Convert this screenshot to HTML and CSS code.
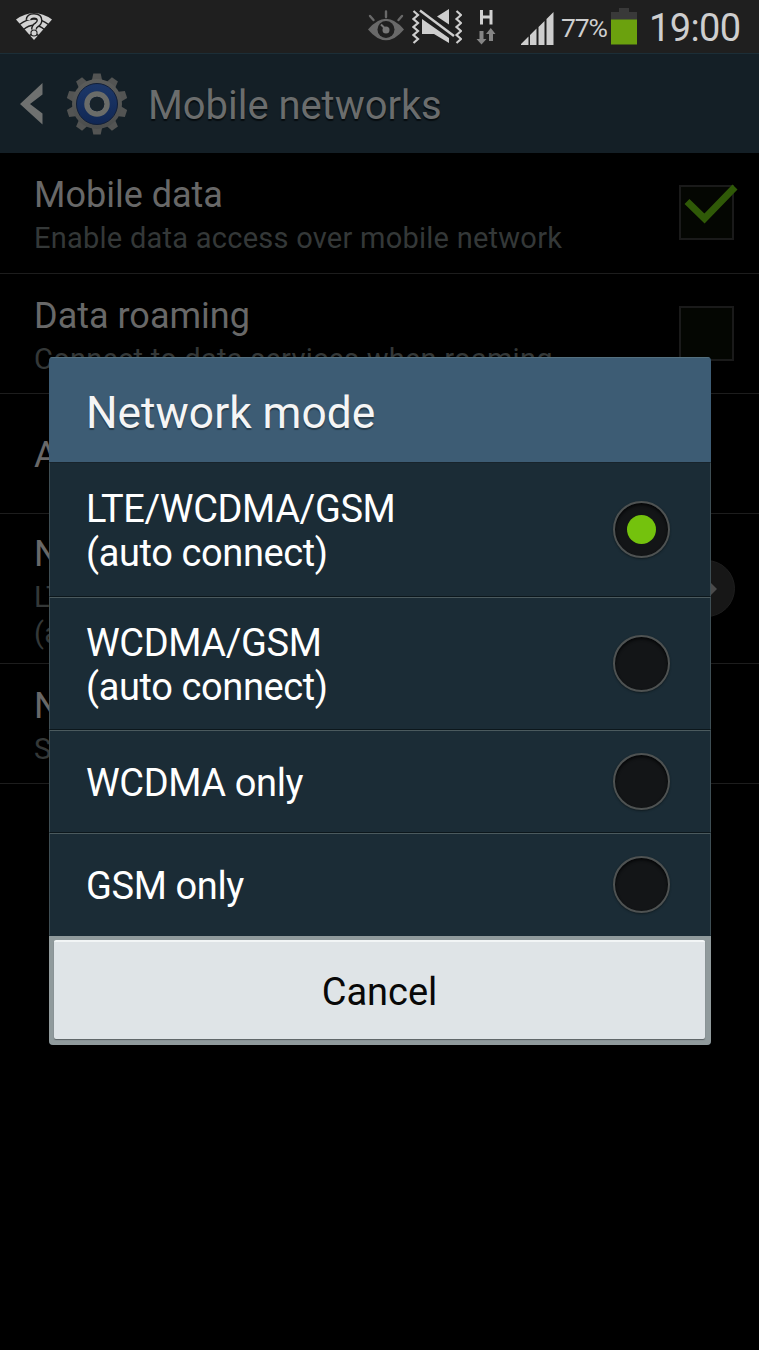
FILE: index.html
```html
<!DOCTYPE html>
<html lang="en">
<head>
<meta charset="utf-8">
<title>Mobile networks</title>
<link rel="stylesheet" href="styles.css">
</head>
<body>
<div class="screen">
  <header class="status">
    <svg class="wifi" width="38" height="30" viewBox="0 0 38 30">
      <path d="M1 7.500Q19-5.500 37 7.500L19 28Z" fill="#d2d2d2"/>
      <path d="M4.500 12.500Q19 1.500 33.500 12.500M8.500 17.500Q19 9 29.500 17.500M13.500 24Q19 20 24.500 24" fill="none" stroke="#1f1f1f" stroke-width="1.500"/>
      <path d="M13.500 8Q14 4 19 4Q24.500 4 24.500 8.500Q24.500 11 21.500 13Q19 14.500 19 17.500" fill="none" stroke="#1f1f1f" stroke-width="6"/>
      <circle cx="19" cy="21" r="3.600" fill="#1f1f1f"/>
      <path d="M13.500 8Q14 4 19 4Q24.500 4 24.500 8.500Q24.500 11 21.500 13Q19 14.500 19 17.500" fill="none" stroke="#d2d2d2" stroke-width="3.200"/>
      <circle cx="19" cy="21" r="2.500" fill="#d2d2d2"/>
    </svg>
    <div class="indicators">
      <svg class="eye" width="38" height="34" viewBox="0 0 38 34">
        <path d="M1 20.500Q19-1 37 20.500Q19 42 1 20.500Z" fill="#696969"/>
        <circle cx="19" cy="20.500" r="8.500" fill="#1f1f1f"/>
        <circle cx="19" cy="21" r="3.500" fill="#777"/>
        <path d="M14 15.500L19 20.500" stroke="#777" stroke-width="2"/>
        <path d="M3 7L6.500 11M19 2.500V8M35 7L31.500 11" stroke="#696969" stroke-width="2.400" stroke-linecap="round"/>
      </svg>
      <svg class="mute" width="50" height="36" viewBox="0 0 50 36">
        <path d="M1.500 2L6 6L1.500 10L6 14L1.500 18L6 22L1.500 26L6 30L1.500 34M44.500 2L49 6L44.500 10L49 14L44.500 18L49 22L44.500 26L49 30L44.500 34" fill="none" stroke="#cecece" stroke-width="2.200"/>
        <path d="M37 0V15.500L25 7.500ZM10 10L37 29V34L22 25H10Z" fill="#cecece"/>
        <path d="M8 1.500L42 27" stroke="#cecece" stroke-width="2.400"/>
      </svg>
      <svg class="hspa" width="20" height="36" viewBox="0 0 20 36">
        <path d="M5.500 1V15.500M15 1V15.500M5 8H15" stroke="#d0d0d0" stroke-width="3" fill="none"/>
        <path d="M3.500 22H7.500V30H10.500L5.500 35.500L0.500 30H3.500ZM13 32V25H10L14.800 19L19.500 25H17V32Z" fill="#858585"/>
      </svg>
      <svg class="signal" width="36" height="34" viewBox="0 0 36 34">
        <path d="M1 34V33L8.500 25.500V34ZM10 34V24L16.500 17.500V34ZM18.500 34V16L24.500 10V34ZM26.500 34V8L33.500 1V34Z" fill="#cecece"/>
      </svg>
      <span class="percent">77%</span>
      <svg class="battery" width="26" height="38" viewBox="0 0 26 38">
        <path d="M8 1H18V5H26V13H0V5H8Z" fill="#393939"/>
        <path d="M0 12.500H26V37.500H0Z" fill="#6ba10e"/>
      </svg>
      <span class="clock">19:00</span>
    </div>
  </header>

  <div class="action-bar">
    <svg class="back" width="24" height="42" viewBox="0 0 24 42">
      <path d="M22.500 0V11.500L10 21L22.500 30.500V41.500L0 21Z" fill="#6f7170"/>
    </svg>
    <svg class="gear" width="62" height="62" viewBox="-31 -31 62 62">
      <defs>
        <linearGradient id="metal" x1="0" y1="0" x2="0" y2="1"><stop offset="0" stop-color="#5c5d5b"/><stop offset="1" stop-color="#4b4d4d"/></linearGradient>
        <linearGradient id="blue" x1="0" y1="0" x2="0" y2="1"><stop offset="0" stop-color="#1d3869"/><stop offset="1" stop-color="#102754"/></linearGradient>
        <path id="tooth" d="M-5.500-22L-3.700-30.500H3.700L5.500-22Z"/>
      </defs>
      <g fill="#535453">
        <use href="#tooth"/><use href="#tooth" transform="rotate(36)"/><use href="#tooth" transform="rotate(72)"/><use href="#tooth" transform="rotate(108)"/><use href="#tooth" transform="rotate(144)"/><use href="#tooth" transform="rotate(180)"/><use href="#tooth" transform="rotate(216)"/><use href="#tooth" transform="rotate(252)"/><use href="#tooth" transform="rotate(288)"/><use href="#tooth" transform="rotate(324)"/>
      </g>
      <circle r="25" fill="url(#metal)"/>
      <circle r="20.500" fill="url(#blue)" stroke="#121f38" stroke-width="1"/>
      <circle r="10" fill="none" stroke="#6a6c69" stroke-width="5.500"/>
      <circle r="7.300" fill="#17222a"/>
    </svg>
    <h1 class="page-title">Mobile networks</h1>
  </div>

  <main class="settings">
    <div class="setting">
      <div class="setting-text"><div class="name">Mobile data</div><div class="summary">Enable data access over mobile network</div></div>
      <div class="checkbox">
        <svg class="tick" width="54" height="40" viewBox="0 0 54 40"><path d="M3 17.500L20.500 34.500L51 3" fill="none" stroke="#2f5907" stroke-width="7"/></svg>
      </div>
    </div>
    <div class="setting">
      <div class="setting-text"><div class="name">Data roaming</div><div class="summary">Connect to data services when roaming</div></div>
      <div class="checkbox"></div>
    </div>
    <div class="setting">
      <div class="setting-text"><div class="name">Access Point Names</div></div>
    </div>
    <div class="setting tall">
      <div class="setting-text"><div class="name">Network mode</div><div class="summary">LTE/WCDMA/GSM<br>(auto connect)</div></div>
      <div class="more"><svg width="10" height="20" viewBox="0 0 10 20"><path d="M0 0L10 10L0 20Z" fill="#4b4b4b"/></svg></div>
    </div>
    <div class="setting">
      <div class="setting-text"><div class="name">Network operators</div><div class="summary">Select a network operator</div></div>
    </div>
  </main>

  <section class="dialog">
    <h2 class="dialog-title"><span>Network mode</span></h2>
    <div class="option two"><span class="label">LTE/WCDMA/GSM<br>(auto connect)</span><i class="radio selected"></i></div>
    <div class="option two second"><span class="label">WCDMA/GSM<br>(auto connect)</span><i class="radio"></i></div>
    <div class="option"><span class="label">WCDMA only</span><i class="radio"></i></div>
    <div class="option"><span class="label">GSM only</span><i class="radio"></i></div>
    <div class="footer"><button class="cancel">Cancel</button></div>
  </section>
</div>
</body>
</html>
```
FILE: styles.css
```css
* { box-sizing: border-box; }
body { margin: 0; background: #000; font-family: Roboto, "Liberation Sans", sans-serif; }
h1, h2 { margin: 0; font-weight: 400; }
svg { display: block; flex: none; }
.screen { position: relative; width: 759px; height: 1350px; overflow: hidden; background: #000; }

.status { height: 53px; background: #1f1f1f; display: flex; justify-content: space-between; padding: 0 18px 0 15px; color: #cecece; }
.wifi { margin-top: 12px; }
.indicators { display: flex; align-items: flex-start; }
.eye { margin: 9px 7px 0 0; }
.mute { margin: 9px 14px 0 0; }
.hspa { margin: 9px 24px 0 0; }
.signal { margin: 11px 5px 0 0; }
.percent { width: 46px; margin-right: 4px; font-size: 26.500px; line-height: 55px; white-space: nowrap; letter-spacing: -1.2px; }
.battery { margin: 7px 12px 0 0; }
.clock { width: 92px; font-size: 38px; line-height: 57px; white-space: nowrap; letter-spacing: -0.6px; }

.action-bar { height: 100px; background: #141f26; border-top: 1px solid #1c2e37; display: flex; align-items: center; padding: 0 20px; }
.back { margin-right: 22px; }
.gear { margin-right: 20px; }
.page-title { font-size: 39.900px; line-height: 50px; color: #6b6d6d; text-shadow: 0 2px 1px #070d10; padding-top: 5px; white-space: nowrap; }

.setting { height: 120px; display: flex; justify-content: space-between; align-items: center; padding: 0 24px 0 34px; border-bottom: 1px solid #1d1d1d; }
.setting:first-child { height: 121px; }
.setting.tall { height: 150px; }
.setting-text { padding-top: 2px; }
.tall .setting-text { padding-top: 5px; }
.name { font-size: 36px; line-height: 46px; color: #686868; white-space: nowrap; }
.summary { font-size: 29px; letter-spacing: 0.250px; line-height: 36px; padding-top: 2px; color: #343838; white-space: nowrap; }
.checkbox { width: 55px; height: 55px; margin: -1px 1px 0 0; border: 2px solid #1a1a1a; background: #040602; position: relative; }
.tick { position: absolute; left: 3px; top: -3px; }
.more { width: 57px; height: 57px; border-radius: 50%; background: #171717; border: 1px solid #1e1e1e; display: flex; align-items: center; justify-content: flex-end; padding-right: 17px; }

.dialog { position: absolute; left: 49px; top: 357px; width: 662px; height: 688px; border-radius: 4px; overflow: hidden; background: #1b2c36; color: #fff; }
.dialog-title { height: 105px; background: #3d5c74; border-top: 1px solid #54707f; padding: 1px 37px 0; font-size: 44.300px; line-height: 108px; color: #f5f5f5; text-shadow: 0 2px 1px #263b4a; white-space: nowrap; }
.option { height: 103px; display: flex; justify-content: space-between; align-items: center; padding: 0 40px 0 36px; border: 1px solid #3e4e54; border-bottom-color: #0c171c; border-top-color: #4b5a5e; font-size: 38px; letter-spacing: -0.380px; line-height: 44px; white-space: nowrap; }
.label { padding-top: 3px; }
.dialog-title + .option { border-top-color: #18242c; }
.option.two { height: 135px; }
.option.second { height: 133px; }
.option:nth-last-child(2) { border-bottom-color: #1b2c36; }
.radio { flex: none; width: 57px; height: 57px; border-radius: 50%; border: 2px solid #4e5252; background: #131517; box-shadow: inset 0 2px 3px #050607, 0 1px 2px #101b20; display: flex; align-items: center; justify-content: center; }
.radio.selected::after { content: ""; width: 29px; height: 29px; border-radius: 50%; background: #74c20d; }
.footer { height: 109px; background: #909a9c; padding: 4px 6px 5px 5px; }
.cancel { display: block; width: 651px; height: 99px; border: 0; border-top: 2px solid #f2f5f6; border-radius: 2px; background: #dfe4e7; color: #080808; font: 38px Roboto, "Liberation Sans", sans-serif; box-shadow: 0 1px 1px #5b6265; padding: 3px 0 0; }
```
